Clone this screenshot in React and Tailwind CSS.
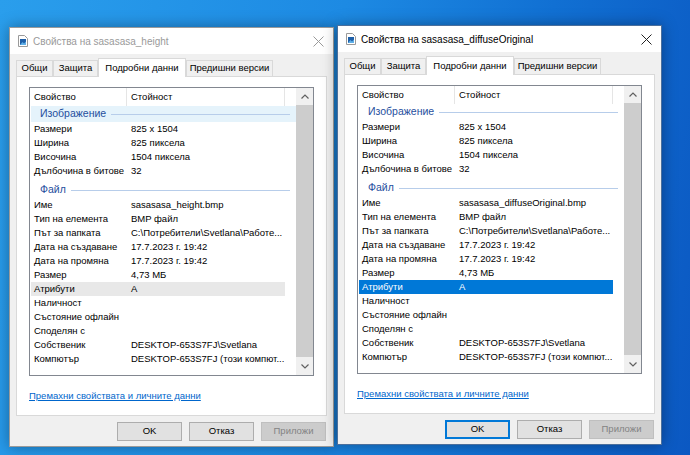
import React from 'react';

const rowsFor = (name) => [
  { group: 'Изображение' },
  ['Размери', '825 x 1504'],
  ['Ширина', '825 пиксела'],
  ['Височина', '1504 пиксела'],
  ['Дълбочина в битове', '32'],
  { group: 'Файл' },
  ['Име', name],
  ['Тип на елемента', 'BMP файл'],
  ['Път за папката', 'C:\\Потребители\\Svetlana\\Работе...'],
  ['Дата на създаване', '17.7.2023 г. 19:42'],
  ['Дата на промяна', '17.7.2023 г. 19:42'],
  ['Размер', '4,73 МБ'],
  ['Атрибути', 'A'],
  ['Наличност', ''],
  ['Състояние офлайн', ''],
  ['Споделян с', ''],
  ['Собственик', 'DESKTOP-653S7FJ\\Svetlana'],
  ['Компютър', 'DESKTOP-653S7FJ (този компют...'],
];

const FileIcon = () => (
  <svg width="10" height="12" viewBox="0 0 10 12">
    <path d="M0.5 0.5h6l3 3v8h-9z" fill="#fff" stroke="#9a9a9a" />
    <rect x="2" y="4" width="6" height="6" fill="#1e5fa8" />
    <path d="M2 10l2.5-3 1.5 1.5 2-2v3.5z" fill="#5fb0e8" />
  </svg>
);

const CloseIcon = ({ color }) => (
  <svg width="11" height="11" viewBox="0 0 11 11">
    <path d="M0.5 0.5l10 10M10.5 0.5l-10 10" stroke={color} strokeWidth="1" />
  </svg>
);

const Chevron = ({ down }) => (
  <svg width="8" height="5" viewBox="0 0 8 5">
    <path d={down ? 'M0.5 0.5l3.5 3.5 3.5-3.5' : 'M0.5 4.5l3.5-3.5 3.5 3.5'} fill="none" stroke="#606060" strokeWidth="1.2" />
  </svg>
);

const Tab = ({ label, width, active }) =>
  active ? (
    <div className={`${width} relative z-10 -mb-px flex h-[19px] items-start justify-center border border-b-0 border-[#d9d9d9] bg-white pt-[2px]`}>
      {label}
    </div>
  ) : (
    <div className={`${width} flex h-[16px] items-center justify-center border border-b-0 border-[#d9d9d9] bg-[#f0f0f0]`}>
      {label}
    </div>
  );

const Window = ({ pos, title, name, active }) => {
  const rows = rowsFor(name);
  return (
    <div
      className={`absolute ${pos} flex w-[325px] flex-col border bg-[#f0f0f0] text-[9.5px] text-black shadow-[0_0_14px_rgba(0,0,0,0.35)] ${
        active ? 'border-[#4b6f9c]' : 'border-[#9a9a9a]'
      }`}
    >
      <div className="flex h-[26px] items-center bg-white pl-[8px] pr-[9px]">
        <FileIcon />
        <span className={`ml-[5px] flex-1 text-[10px] ${active ? 'text-black' : 'text-[#9a9a9a]'}`}>{title}</span>
        <CloseIcon color={active ? '#222' : '#9a9a9a'} />
      </div>

      <div className="mt-[4px] flex h-[18px] items-end pl-[6px]">
        <Tab label="Общи" width="w-[37px]" />
        <Tab label="Защита" width="w-[45px]" />
        <Tab label="Подробни данни" width="w-[88px]" active />
        <Tab label="Предишни версии" width="w-[87px]" />
      </div>

      <div className="ml-[6px] flex h-[340px] w-[311px] flex-col border border-[#d9d9d9] bg-white pl-[12px] pt-[10px]">
        <div className="flex h-[289px] w-[285px] border border-[#828790] bg-white">
          <div className="flex min-w-0 flex-1 flex-col">
            <div className="flex h-[18px] items-center">
              <div className="flex h-full w-[97px] shrink-0 items-center border-r border-[#e5e5e5] pl-[4px]">Свойство</div>
              <div className="flex h-full w-[158px] shrink-0 items-center border-r border-[#e5e5e5] pl-[4px]">Стойност</div>
            </div>
            {rows.map((r, i) =>
              r.group ? (
                <div
                  key={i}
                  className={`ml-px flex items-center pl-[9px] pr-[6px] text-[10.5px] text-[#1f4f9e] ${
                    i === 0 ? 'h-[16px]' : 'h-[20px] pt-[4px]'
                  } ${i === 0 && !active ? 'bg-[#e5f3fb]' : ''}`}
                >
                  <span>{r.group}</span>
                  <div className="ml-[5px] h-px flex-1 bg-[#b7cdea]" />
                </div>
              ) : (
                <div
                  key={i}
                  className={`ml-px flex h-[14px] w-[254px] items-center ${
                    r[0] === 'Атрибути' ? (active ? 'bg-[#0078d7] text-white' : 'bg-[#e8e8e8]') : ''
                  }`}
                >
                  <div className="w-[96px] shrink-0 whitespace-nowrap pl-[3px]">{r[0]}</div>
                  <div className="whitespace-nowrap pl-[4px]">{r[1]}</div>
                </div>
              )
            )}
          </div>
          <div className="flex w-[17px] shrink-0 flex-col bg-[#f0f0f0]">
            <div className="flex h-[17px] items-center justify-center">
              <Chevron />
            </div>
            <div className="mb-px flex-1 bg-[#cdcdcd]" />
            <div className="flex h-[17px] items-center justify-center">
              <Chevron down />
            </div>
          </div>
        </div>
        <div className="mt-[13px] text-[#0066cc] underline">Премахни свойствата и личните данни</div>
      </div>

      <div className="mt-[6px] mb-[5px] flex justify-end gap-[7px] pr-[7px]">
        <button className={`h-[19px] w-[65px] bg-[#e1e1e1] ${active ? 'border-2 border-[#0078d7]' : 'border border-[#adadad]'}`}>OK</button>
        <button className="h-[19px] w-[65px] border border-[#adadad] bg-[#e1e1e1]">Отказ</button>
        <button className="h-[19px] w-[65px] border border-[#bfbfbf] bg-[#cccccc] text-[#838383]">Приложи</button>
      </div>
    </div>
  );
};

export default function App() {
  return (
    <div className="relative h-[455px] w-[690px] overflow-hidden bg-[linear-gradient(100deg,#2a9eec_0%,#1d8ae3_45%,#1170d3_72%,#0b58c2_100%)] font-['Liberation_Sans',Arial,sans-serif]">
      <Window pos="left-[9px] top-[27px]" title="Свойства на sasasasa_height" name="sasasasa_height.bmp" />
      <Window pos="left-[337px] top-[25px]" title="Свойства на sasasasa_diffuseOriginal" name="sasasasa_diffuseOriginal.bmp" active />
    </div>
  );
}
